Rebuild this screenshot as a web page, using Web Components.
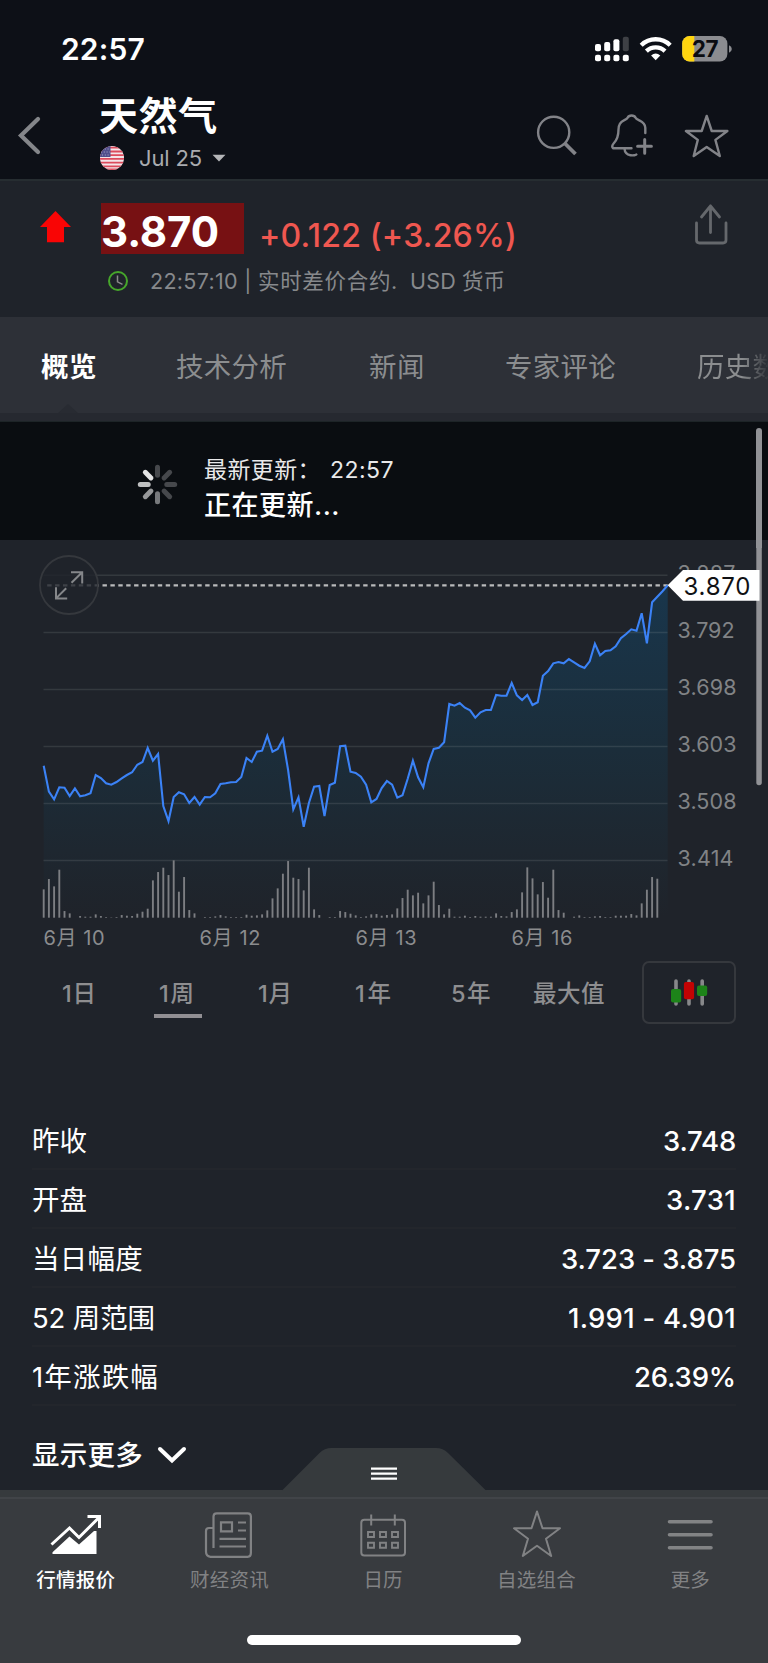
<!DOCTYPE html>
<html lang="zh-CN">
<head>
<meta charset="utf-8">
<meta name="viewport" content="width=device-width">
<title>天然气</title>
<style>
html,body{margin:0;padding:0;background:#1f232a}
body{width:768px;height:1663px;overflow:hidden;font-family:Inter,"Noto Sans CJK SC",sans-serif;color:#fff}
</style>
</head>
<body>
<quote-app></quote-app>
<script>
const define = (name, html, setup) => {
  const tpl = document.createElement('template');
  tpl.innerHTML = html;
  customElements.define(name, class extends HTMLElement {
    constructor() {
      super();
      this.attachShadow({mode: 'open'}).append(tpl.content.cloneNode(true));
    }
    connectedCallback() { if (setup) setup(this, this.shadowRoot); }
  });
};

/* Text that spreads its letters to fill a given advance width (w). */
define('fit-text', `<style>:host{display:inline-block;white-space:pre;flex:none}</style><slot></slot>`, el => {
  const w = parseFloat(el.getAttribute('w'));
  if (!w) return;
  el.style.letterSpacing = '0px';
  const natural = el.getBoundingClientRect().width;
  el.style.letterSpacing = ((w - natural) / el.textContent.length) + 'px';
});

define('status-bar', `<style>
:host{display:flex;height:90px;align-items:flex-start;justify-content:space-between;box-sizing:border-box;padding:34px 32px 0 61px}
.time{font-size:30px;font-weight:600;line-height:31px}
.r{display:flex;height:30px}
.bat{display:grid;width:54px;height:30px}
.bat>*{grid-area:1/1}
.bat span{font-size:22.500px;font-weight:700;line-height:30px;color:#0b0c10;width:46px;text-align:center;letter-spacing:-.4px}
</style>
<fit-text class="time" w="84">22:57</fit-text>
<div class="r">
<svg width="90" height="30" viewBox="592 34 90 30" fill="#fff">
<rect x="595" y="44" width="6" height="7.3" rx="2"/><rect x="604.2" y="42" width="6" height="9.3" rx="2"/><rect x="613.4" y="39.3" width="6" height="12" rx="2"/><rect x="622.8" y="36.8" width="6" height="14.5" rx="2" fill="#3e4045"/>
<rect x="595" y="54.8" width="6" height="6.4" rx="2"/><rect x="604.2" y="54.8" width="6" height="6.4" rx="2"/><rect x="613.4" y="54.8" width="6" height="6.4" rx="2"/><rect x="622.8" y="54.8" width="6" height="6.4" rx="2"/>
<g fill="none" stroke="#fff" stroke-width="4.3"><path d="M641.2 45.2a20.6 20.6 0 0 1 29 0"/><path d="M646.4 51.1a13.4 13.4 0 0 1 18.6 0"/></g>
<path d="M655.7 60.2l-4.6-4.7q4.6-3.8 9.2 0z"/>
</svg>
<div class="bat"><svg width="54" height="30" viewBox="682 34 54 30">
<defs><clipPath id="b"><rect x="682.2" y="36" width="45.2" height="25.5" rx="7.5"/></clipPath></defs>
<g clip-path="url(#b)"><rect x="682" y="35" width="46" height="27" fill="#8b8c90"/><rect x="682" y="35" width="12.3" height="27" fill="#ffd50f"/></g>
<path d="M729 45.200v7.600q2.800-1 2.800-3.800t-2.800-3.800z" fill="#8b8c90"/></svg><span>27</span></div>
</div>`);

define('title-bar', `<style>
:host{display:flex;height:89px;box-sizing:border-box}
svg{flex:none;display:block}
.t{flex:1;padding-left:51px}
.name{font-size:39px;font-weight:700;line-height:52px;height:52px}
.sub{display:flex;align-items:center;height:31px;color:#a9abaf}
.d{font-size:22px;line-height:32px;margin:0 10px 0 14px}
</style>
<svg width="48" height="89" viewBox="0 90 48 89"><path d="M38 119 21 135.500 38 152" fill="none" stroke="#84868a" stroke-width="4.200" stroke-linecap="round" stroke-linejoin="miter"/></svg>
<div class="t"><div class="name"><fit-text w="119">天然气</fit-text></div>
<div class="sub"><svg width="26" height="26" viewBox="97 144.500 26 26"><defs><clipPath id="f"><circle cx="110" cy="157.500" r="12"/></clipPath></defs>
<g clip-path="url(#f)"><rect x="97" y="145" width="26" height="26" fill="#f4e4e8"/>
<path d="M97 147.200h26M97 151h26M97 154.700h26M97 158.400h26M97 162.100h26M97 165.800h26M97 169h26" stroke="#dc4a5c" stroke-width="1.800"/>
<rect x="97" y="145" width="11.500" height="11.500" fill="#514f8c"/><path d="M100 148.500h8M99 151.500h9M100 154.500h8" stroke="#aaa9ca" stroke-width="1" stroke-dasharray="1 1.800"/></g></svg>
<fit-text class="d" w="63">Jul 25</fit-text>
<svg width="14" height="8" viewBox="0 0 14 8"><path d="M.5.7h13L7 7.500z" fill="#b4b5b8"/></svg></div></div>
<svg width="248" height="89" viewBox="520 90 248 89" fill="none" stroke="#828388" stroke-width="2.400" stroke-linecap="round" stroke-linejoin="round">
<circle cx="553.700" cy="132.300" r="15.600"/><path d="M565 143.500 575.500 154" stroke-width="3.800" stroke-linecap="butt"/>
<path d="M645.300 133v-5.300c-.1-3.600-2.700-5.800-6-7.400-2.300-1-3.200-1.300-3.700-2.600-.8-1.600-2-2.200-4-2.200s-3.200.6-4 2.200c-.5 1.300-1.400 1.600-3.700 2.600-4 1.800-5.400 5-5.400 9.200 0 6-.9 9.600-4.500 13.500-1.700 1.800-2.800 3.200-1 5.200H631.500"/>
<path d="M624.500 148.500c.5 9 11.500 6.900 11.900 6"/><path d="M644.700 139.500v13.800M637.600 146.200h13.800" stroke-width="3"/>
<path d="M706.700 115.900 711.700 131h15.700L715.400 139.900 719.800 156 706.700 146.900 693.700 156 697.800 139.900 685.900 131h15.800z"/>
</svg>`);

define('price-panel', `<style>
:host{display:block;height:138px;box-sizing:border-box;background:#1f232a;border-top:2px solid #262d31;padding-top:22px}
.row{display:flex;height:52px}
svg{display:block;flex:none}
.p{background:#771113;width:143px;height:51px;margin-left:23px}
.p fit-text{font-size:42px;font-weight:700;line-height:57px}
.c{font-size:32px;font-weight:500;color:#ef5750;line-height:65px;margin-left:15px}
.share{margin:0 40px 0 auto}
.sub{display:flex;align-items:center;height:30px;margin:11px 0 0 108px;font-size:21.500px;color:#87898c;line-height:30px}
.m1{margin-left:22px}.m2{margin-left:12px}.m3{margin-left:6px}
</style>
<div class="row"><svg width="78" height="52" viewBox="0 203 78 52"><path d="M55.500 211 71 227H64v15.300H47V227H40z" fill="#f90505"/></svg>
<div class="p"><fit-text w="118">3.870</fit-text></div><fit-text class="c" w="258">+0.122 (+3.26%)</fit-text>
<svg class="share" width="34" height="46" viewBox="694 203 34 46" fill="none" stroke="#65686c" stroke-width="2.800" stroke-linecap="round" stroke-linejoin="round"><path d="M696.500 223v17q0 3 3 3h23.500q3 0 3-3v-17M710.500 232.500V206M701.500 217l9-11 9 11"/></svg></div>
<div class="sub"><svg width="20" height="20" viewBox="0 0 20 20" fill="none"><circle cx="10" cy="10" r="9" stroke="#46a62b" stroke-width="2"/><path d="M9.500 4.500v6.300l5 2.500" stroke="#8b8b8c" stroke-width="1.500"/></svg>
<fit-text class="m1" w="108">22:57:10 | </fit-text><fit-text w="140">实时差价合约.</fit-text><fit-text class="m2" w="46">USD</fit-text><fit-text class="m3" w="43">货币</fit-text></div>`);

define('tab-strip', `<style>
:host{display:block;height:105px;box-sizing:border-box;background:#262930;border-bottom:1px solid #1d2427}
.bar{position:relative;height:96px;background:#2d3037;display:flex;overflow:hidden;padding-left:41px;box-sizing:border-box;font-size:27.500px;line-height:100px;color:#8b8d8f}
.bar fit-text{margin-right:var(--g)}
.on{color:#fff;font-weight:700}
.last{background:linear-gradient(90deg,#8b8d8f 0 45px,#303339 72px);-webkit-background-clip:text;background-clip:text;color:transparent}
.n{position:absolute;left:58px;bottom:0}
</style>
<div class="bar"><fit-text class="on" w="56" style="--g:79px">概览</fit-text><fit-text w="111" style="--g:82px">技术分析</fit-text><fit-text w="56" style="--g:80px">新闻</fit-text><fit-text w="111" style="--g:81px">专家评论</fit-text><fit-text class="last" w="111">历史数据</fit-text>
<svg class="n" width="20" height="9"><path d="M0 9 10 0 20 9z" fill="#282b32"/></svg></div>`);

define('update-banner', `<style>
:host{display:flex;height:118px;background:#0a0d11;padding-left:136px;box-sizing:border-box}
svg{flex:none;margin:41px 25px 0 0}
.a{font-size:23px;line-height:34px;display:flex;padding-top:31px;color:#e9e9ea}
.a fit-text+fit-text{margin-left:9px}
.b{font-size:27px;font-weight:500;line-height:38px}
</style>
<svg width="43" height="43" viewBox="-21.500 -21.500 43 43" stroke-width="5" stroke-linecap="round"></svg>
<div><div class="a"><fit-text w="117">最新更新：</fit-text><fit-text w="64">22:57</fit-text></div><div class="b"><fit-text w="136">正在更新...</fit-text></div></div>`, (el, root) => {
  const shades = ['#46484c', '#46484c', '#46484c', '#46484c', '#77797c', '#97989a', '#bfc0c1', '#e4e4e5'];
  root.querySelector('svg').innerHTML = shades.map((c, i) => `<path d="M0-9.300V-17.200" stroke="${c}" transform="rotate(${i * 45})"/>`).join('');
});

define('price-chart', `<style>
:host{display:block;height:420px;background:#1f232a}
svg{display:block;font-family:Inter,"Noto Sans CJK SC",sans-serif}
</style><svg width="768" height="420" viewBox="0 540 768 420"></svg>`, (el, root) => {
  const left = [377,455,478,442,443,468,445,469,466,460,405,414,430,434,426,415,405,397,374,366,324,362,342,498,543,471,457,463,489,471,494,471,472,460,432,430,427,426,411,354,366,335,332,287,335,327,298,390,508,472,560,489,440,438,528,435,428,319,317,395,399,410,434,487,477,444];
  const right = [723,734,773,766,716,662,712,742,670,627,623,607,492,497,489,503,511,533,517,510,510,465,467,467,429,466,480,465,495,487,407,393,370,366,370,357,367,377,384,364,311,346,333,331,319,295,282,268,272,220,310,187,170,154,136];
  const X = i => 43.7 + 5.2 * i;
  const ys = [...left.map(v => 640 + v / 3), ...right.map(v => 540 + v / 3)];
  const pts = ys.map((y, i) => `${X(i).toFixed(1)} ${y.toFixed(1)}`).join('L');
  const volume = [85,116,94,144,20,13,0,5,3,3,10,5,2,1,2,8,6,5,12,18,27,112,137,150,128,172,78,122,23,13,0,2,2,4,8,4,2,2,2,9,6,7,10,22,58,88,132,170,120,116,82,150,25,8,0,2,2,20,17,12,7,2,4,10,11,6,8,10,28,59,84,67,75,43,67,108,38,10,27,3,3,6,2,5,3,3,3,13,5,4,17,25,76,151,118,70,107,60,144,23,15,0,3,7,2,2,4,5,2,2,6,6,6,11,7,43,84,122,117];
  const grid = [575.3, 632.4, 689.4, 746.5, 803.6, 860.6];
  const labels = ['3.887', '3.792', '3.698', '3.603', '3.508', '3.414'], widths = [58, 57, 59, 59, 59, 56];
  root.querySelector('svg').innerHTML = `
<defs><linearGradient id="g" x1="0" y1="585" x2="0" y2="917" gradientUnits="userSpaceOnUse"><stop offset="0" stop-color="#19364c"/><stop offset=".5" stop-color="#1b2d3a"/><stop offset=".8" stop-color="#1e2730"/><stop offset="1" stop-color="#1f232a"/></linearGradient></defs>
<path d="M43.7 917.700L${pts}V917.700z" fill="url(#g)"/>
${grid.map(y => `<path d="M43.500 ${y}H667.500" stroke="#a0a5a6" stroke-opacity=".17" stroke-width="1.500"/>`).join('')}
<path d="M47.200 585.300H668" stroke="#b9babb" stroke-width="2.200" stroke-dasharray="4.400 3.500"/>
${volume.map((h, i) => h ? `<path d="M${X(i)} 917.700v${-h / 3}" stroke="#7c7e82" stroke-width="1.900"/>` : '').join('')}
<path d="M${pts}" fill="none" stroke="#3b82f6" stroke-width="2.100"/>
<g fill="#818386" font-size="21.500">${grid.map((y, i) => `<text x="677.500" y="${y + 5.600}" textLength="${widths[i]}">${labels[i]}</text>`).join('')}</g>
<rect x="756.300" y="530" width="5.500" height="255.300" rx="2.700" fill="#919296"/>
<path d="M667.700 585.300 683 570h76.500v30.800H683z" fill="#fff"/>
<text x="683.500" y="594.500" font-size="24" fill="#101114" textLength="67">3.870</text>
<circle cx="69" cy="585" r="29" fill="#1f232a" fill-opacity=".8" stroke="#35383d" stroke-width="1.800"/>
<path d="M71 572.200h11.200v11.200M82.200 572.200 71.500 582.800M56 587.200v11.200h11.200M56 598.400 66.200 588.200" fill="none" stroke="#85878a" stroke-width="2"/>
<g fill="#8b8c8e" font-size="20">${[10, 12, 13, 16].map((d, i) => `<text x="${43.500 + 156 * i}" y="945" textLength="61">6月 ${d}</text>`).join('')}</g>`;
});

define('range-picker', `<style>
:host{display:flex;height:66px;font-size:23.500px;font-weight:500;color:#8e8e90;line-height:67px;padding-left:62px;box-sizing:border-box}
fit-text{margin-right:var(--g)}
.on{position:relative}
.on i{position:absolute;left:-5px;top:53.500px;width:48px;height:4.500px;background:#918f93}
.btn{width:94px;height:63px;border:2px solid #35383d;border-radius:7px;box-sizing:border-box;margin-top:1px}
svg{display:block}
</style>
<fit-text w="35" style="--g:62px">1日</fit-text><div class="on"><fit-text w="37" style="--g:62px">1周</fit-text><i></i></div><fit-text w="35" style="--g:62px">1月</fit-text><fit-text w="39" style="--g:57px">1年</fit-text><fit-text w="41" style="--g:41px">5年</fit-text><fit-text w="72" style="--g:37px">最大值</fit-text>
<div class="btn"><svg width="90" height="59" viewBox="644 963 90 59"><g stroke="#87888a" stroke-width="3.600" stroke-linecap="round"><path d="M676 981v23M689 981v23M702.200 981v23"/></g><rect x="671" y="989" width="10.200" height="13.500" rx="2" fill="#1d8419"/><rect x="683.900" y="982" width="10.200" height="17.200" rx="2" fill="#c20303"/><rect x="697" y="985.500" width="10.200" height="10.500" rx="2" fill="#1d8419"/></svg></div>`);

define('stat-row', `<style>
:host{display:flex;justify-content:space-between;height:59.100px;box-sizing:border-box;border-bottom:2px solid #23262c;line-height:60px;margin:0 32px;font-size:27.500px}
b{font-weight:450;font-size:27.500px}
</style><slot></slot><b><slot name="value"></slot></b>`);

define('show-more', `<style>
:host{display:flex;height:83px;padding-left:32px;font-size:27.500px;font-weight:500;line-height:98px}
svg{margin:40px 0 0 14px}
</style><slot></slot><svg width="30" height="20" viewBox="157 1446 30 20"><path d="M160 1449l12 11.500 12-11.500" fill="none" stroke="#fff" stroke-width="4" stroke-linecap="round"/></svg>`);

define('nav-item', `<style>
:host{flex:1;display:flex;flex-direction:column;align-items:center;font-size:19.500px;color:#818284;line-height:28px}
:host([active]){color:#fff;font-weight:500}
</style><slot name="icon"></slot><slot></slot>`);

define('bottom-nav', `<style>
:host{position:relative;display:block;height:173px;background:#383b3f}
.lip{height:7px;background:#363a3d;border-bottom:2px solid #414448}
.notch{position:absolute;left:282px;top:-42px}
.items{display:flex;padding:3px 1px 0 0;margin-left:-1px}
svg{display:block}
.home{width:274px;height:10px;border-radius:5px;background:#fff;margin:41px auto 0}
</style>
<svg class="notch" width="206" height="43" viewBox="282 1448 206 43"><path d="M281.500 1491 319.500 1453q5-5 12-5H436q7 0 12 5l38.500 38z" fill="#363a3d"/><path d="M371 1468.700h26M371 1473.700h26M371 1478.700h26" stroke="#fff" stroke-width="2.200"/></svg>
<div class="lip"></div>
<div class="items">
<nav-item active><svg slot="icon" width="60" height="64" viewBox="46 1502 60 64" fill="none" stroke="#fff" stroke-width="3"><path d="M51.500 1544.500 69.500 1528 79 1537.500 99 1517.500M87.500 1516.500H99.500V1528"/><path d="M52.500 1554v-1.800L69.500 1536.500l9.500 8 15-13.500h2.500v23z" fill="#fff" stroke="none"/></svg><fit-text w="79">行情报价</fit-text></nav-item>
<nav-item><svg slot="icon" width="60" height="64" viewBox="200 1502 60 64" fill="none" stroke="#818284" stroke-width="2.200"><path d="M214.500 1548v-31.500q0-3.200 3.200-3.200h31q3.200 0 3.200 3.200V1553q0 3.800-3.200 3.800H211.500q-4.500-.5-4.500-5V1531q0-3 3-3h4.500"/><path d="M222 1522.300h11v9h-11zM239 1522.500h8M239 1530.500h8M220.500 1538.800H247M220.500 1546.500H247"/></svg><fit-text w="79">财经资讯</fit-text></nav-item>
<nav-item><svg slot="icon" width="60" height="64" viewBox="354 1502 60 64" fill="none" stroke="#818284" stroke-width="2"><rect x="362.300" y="1519.800" width="43.700" height="35.800" rx="3"/><path d="M372.200 1514.500v11M395.800 1514.500v11"/><path stroke-width="1.900" d="M369 1532h6v5h-6zM381 1532h6v5h-6zM393 1532h6v5h-6zM369 1542.800h6v5h-6zM381 1542.800h6v5h-6zM393 1542.800h6v5h-6z"/></svg><fit-text w="39">日历</fit-text></nav-item>
<nav-item><svg slot="icon" width="60" height="64" viewBox="507 1502 60 64" fill="none" stroke="#818284" stroke-width="2" stroke-linejoin="round"><path d="M537 1511.500 542.500 1528.300H560L546 1538.700 551.200 1556 537 1545.800 522.800 1556 528 1538.700 514 1528.300h17.500z"/></svg><fit-text w="79">自选组合</fit-text></nav-item>
<nav-item><svg slot="icon" width="60" height="64" viewBox="660.500 1502 60 64" fill="none" stroke="#828385" stroke-width="3.600" stroke-linecap="round"><path d="M670 1521.700h41.500M670 1534.700h41.500M670 1547.700h41.500"/></svg><fit-text w="39">更多</fit-text></nav-item>
</div>
<div class="home"></div>`);

define('quote-app', `<style>
:host{display:flex;flex-direction:column;width:768px;height:1663px;position:relative;overflow:hidden}
:host>*{flex:none}
header{background:#0d1017;height:179px}
.stats{padding-top:85px}
.scroll{position:absolute;left:756.300px;top:428px;width:5.500px;height:120px;border-radius:3px 3px 0 0;background:#919296}
bottom-nav{margin-top:auto}
</style>
<header><status-bar></status-bar><title-bar></title-bar></header>
<price-panel></price-panel>
<tab-strip></tab-strip>
<update-banner></update-banner>
<price-chart></price-chart>
<range-picker></range-picker>
<div class="stats">
<stat-row><fit-text w="55">昨收</fit-text><fit-text slot="value" w="73">3.748</fit-text></stat-row>
<stat-row><fit-text w="55">开盘</fit-text><fit-text slot="value" w="70">3.731</fit-text></stat-row>
<stat-row><fit-text w="111">当日幅度</fit-text><fit-text slot="value" w="175">3.723 - 3.875</fit-text></stat-row>
<stat-row><fit-text w="123">52 周范围</fit-text><fit-text slot="value" w="168">1.991 - 4.901</fit-text></stat-row>
<stat-row><fit-text w="127">1年涨跌幅</fit-text><fit-text slot="value" w="102">26.39%</fit-text></stat-row>
</div>
<show-more><fit-text w="111">显示更多</fit-text></show-more>
<bottom-nav></bottom-nav>
<div class="scroll"></div>`);
</script>
</body>
</html>
